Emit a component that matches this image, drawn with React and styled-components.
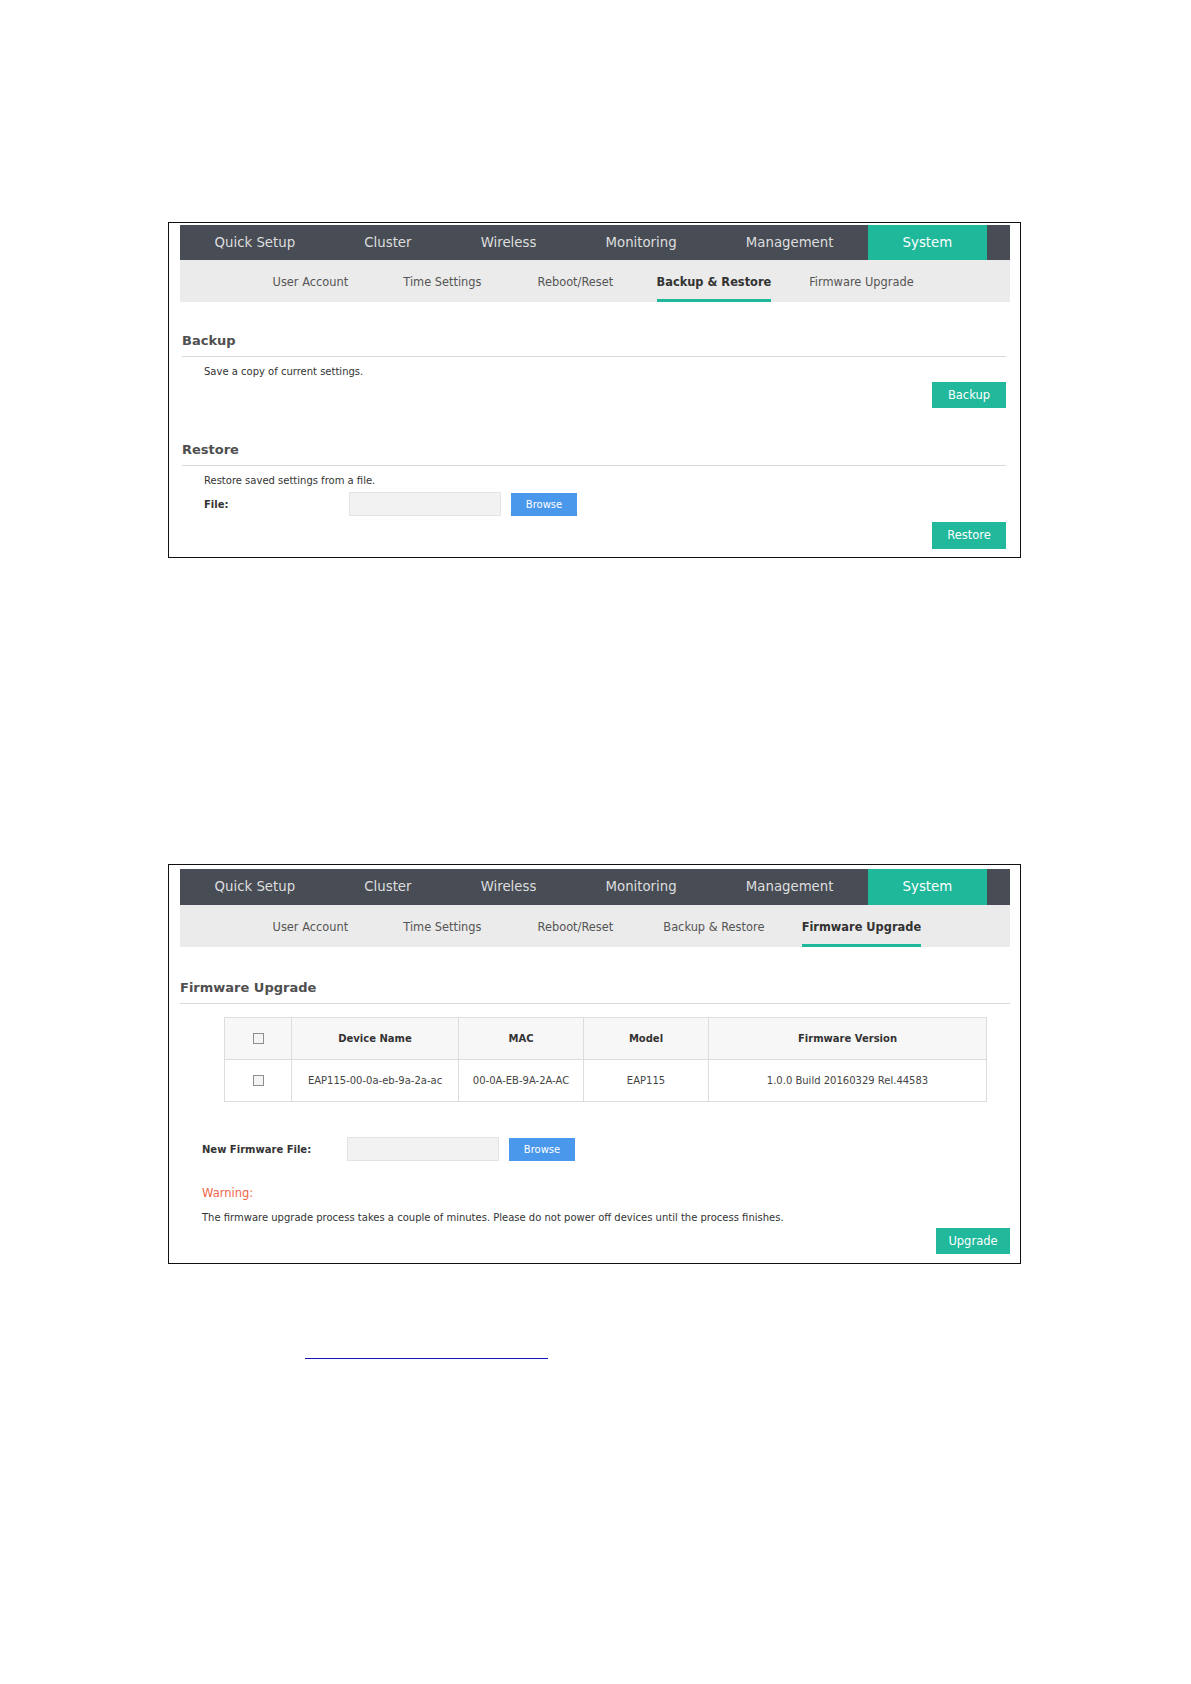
import React from "react";
import styled, { createGlobalStyle } from "styled-components";

const Global = createGlobalStyle`
  html, body { margin: 0; padding: 0; background: #fff; }
  body { font-family: "DejaVu Sans", Verdana, sans-serif; color: #333; }
  * { box-sizing: border-box; }
`;

const Page = styled.div`
  width: 1191px;
  min-height: 1684px;
  padding: 222px 0 0 168px;
`;

const Frame = styled.section`
  width: 853px;
  border: 1px solid #111;
  padding: ${(p) => p.$top}px 10px 8.5px 11px;
  & + & {
    margin-top: 306px;
  }
`;

const TopNav = styled.nav`
  display: flex;
  height: 35.5px;
  background: #474c55;
`;

const NavItem = styled.div`
  padding: 0 34.6px;
  line-height: 35.5px;
  font-size: 13.3px;
  white-space: nowrap;
  color: ${(p) => (p.$active ? "#ffffff" : "#dedede")};
  background: ${(p) => (p.$active ? "#20b89b" : "transparent")};
`;

const SubNav = styled.div`
  display: flex;
  height: 42px;
  padding-left: 64.4px;
  background: #ebebeb;
`;

const SubItem = styled.div`
  width: ${(p) => p.$w}px;
  display: flex;
  justify-content: center;
`;

const SubLabel = styled.span`
  display: flex;
  align-items: center;
  padding-top: 5px;
  font-size: 11.4px;
  white-space: nowrap;
  font-weight: ${(p) => (p.$active ? 700 : 400)};
  color: ${(p) => (p.$active ? "#333" : "#555")};
  border-bottom: 3px solid ${(p) => (p.$active ? "#20b89b" : "transparent")};
`;

const Body = styled.div`
  padding: 0 ${(p) => p.$pr}px 0 ${(p) => p.$pl}px;
`;

const SectionTitle = styled.h2`
  margin: ${(p) => p.$mt}px 0 0;
  padding-bottom: 6px;
  border-bottom: 1px solid #d8d8d8;
  font-size: 13px;
  line-height: 18px;
  font-weight: 700;
  color: #4f4f4f;
`;

const Text = styled.p`
  margin: ${(p) => p.$mt}px 0 0 ${(p) => p.$indent}px;
  font-size: ${(p) => p.$size || 10}px;
  line-height: 14px;
  color: ${(p) => p.$color || "#333"};
`;

const ButtonRow = styled.div`
  display: flex;
  justify-content: flex-end;
  margin-top: ${(p) => p.$mt}px;
`;

const ActionButton = styled.button`
  width: 74px;
  height: ${(p) => p.$h}px;
  padding: 0;
  border: 0;
  background: #21b89b;
  color: #fff;
  font-family: "DejaVu Sans", sans-serif;
  font-size: 11.5px;
`;

const FieldRow = styled.div`
  display: flex;
  align-items: center;
  margin: ${(p) => p.$mt}px 0 0 ${(p) => p.$indent}px;
`;

const FieldLabel = styled.label`
  width: 145px;
  font-size: 10px;
  font-weight: 700;
  color: #333;
`;

const FileBox = styled.div`
  width: 152px;
  height: 24px;
  background: #f2f2f2;
  border: 1px solid #e3e3e3;
`;

const BrowseButton = styled.button`
  margin-left: 10px;
  width: 66px;
  height: 23px;
  padding: 0;
  border: 0;
  background: #4a98eb;
  color: #fff;
  font-family: "DejaVu Sans", sans-serif;
  font-size: 10px;
`;

const Table = styled.table`
  margin: 13px 0 0 44px;
  width: 762px;
  border-collapse: collapse;
  table-layout: fixed;
  font-size: 10px;
`;

const Th = styled.th`
  height: 42px;
  padding: 0;
  background: #f7f7f7;
  border: 1px solid #dddddd;
  font-weight: 700;
  color: #333;
  text-align: center;
`;

const Td = styled.td`
  height: 42px;
  padding: 0;
  border: 1px solid #dddddd;
  color: #444;
  text-align: center;
`;

const Check = styled.span`
  display: inline-block;
  width: 11px;
  height: 11px;
  border: 1px solid #8e8e8e;
  background: #f4f4f4;
  vertical-align: middle;
`;

const LinkLine = styled.div`
  margin: 94px 0 0 137px;
  width: 243px;
  height: 1px;
  background: #1515b8;
`;

const navItems = ["Quick Setup", "Cluster", "Wireless", "Monitoring", "Management", "System"];
const subItems = [
  ["User Account", 132],
  ["Time Settings", 132],
  ["Reboot/Reset", 134],
  ["Backup & Restore", 143],
  ["Firmware Upgrade", 152],
];

function Navigation({ activeSub }) {
  return (
    <>
      <TopNav>
        {navItems.map((n) => (
          <NavItem key={n} $active={n === "System"}>
            {n}
          </NavItem>
        ))}
      </TopNav>
      <SubNav>
        {subItems.map(([label, w]) => (
          <SubItem key={label} $w={w}>
            <SubLabel $active={label === activeSub}>{label}</SubLabel>
          </SubItem>
        ))}
      </SubNav>
    </>
  );
}

export default function App() {
  return (
    <Page>
      <Global />
      <Frame $top={1.5}>
        <Navigation activeSub="Backup & Restore" />
        <Body $pl={2} $pr={4}>
          <SectionTitle $mt={29.5}>Backup</SectionTitle>
          <Text $mt={8} $indent={22}>Save a copy of current settings.</Text>
          <ButtonRow $mt={3.5}>
            <ActionButton $h={26}>Backup</ActionButton>
          </ButtonRow>
          <SectionTitle $mt={33}>Restore</SectionTitle>
          <Text $mt={8} $indent={22}>Restore saved settings from a file.</Text>
          <FieldRow $mt={4} $indent={22}>
            <FieldLabel>File:</FieldLabel>
            <FileBox />
            <BrowseButton>Browse</BrowseButton>
          </FieldRow>
          <ButtonRow $mt={5.5}>
            <ActionButton $h={27}>Restore</ActionButton>
          </ButtonRow>
        </Body>
      </Frame>

      <Frame $top={4}>
        <Navigation activeSub="Firmware Upgrade" />
        <Body $pl={0} $pr={0}>
          <SectionTitle $mt={32.5}>Firmware Upgrade</SectionTitle>
          <Table>
            <colgroup>
              <col style={{ width: 67 }} />
              <col style={{ width: 167 }} />
              <col style={{ width: 125 }} />
              <col style={{ width: 125 }} />
              <col style={{ width: 278 }} />
            </colgroup>
            <thead>
              <tr>
                <Th><Check /></Th>
                <Th>Device Name</Th>
                <Th>MAC</Th>
                <Th>Model</Th>
                <Th>Firmware Version</Th>
              </tr>
            </thead>
            <tbody>
              <tr>
                <Td><Check /></Td>
                <Td>EAP115-00-0a-eb-9a-2a-ac</Td>
                <Td>00-0A-EB-9A-2A-AC</Td>
                <Td>EAP115</Td>
                <Td>1.0.0 Build 20160329 Rel.44583</Td>
              </tr>
            </tbody>
          </Table>
          <FieldRow $mt={35} $indent={22}>
            <FieldLabel>New Firmware File:</FieldLabel>
            <FileBox />
            <BrowseButton>Browse</BrowseButton>
          </FieldRow>
          <Text $mt={25} $indent={22} $size={11.5} $color="#f0664a">Warning:</Text>
          <Text $mt={11} $indent={22}>
            The firmware upgrade process takes a couple of minutes. Please do not power off devices until the process finishes.
          </Text>
          <ButtonRow $mt={2.5}>
            <ActionButton $h={26.5}>Upgrade</ActionButton>
          </ButtonRow>
        </Body>
      </Frame>
      <LinkLine />
    </Page>
  );
}
